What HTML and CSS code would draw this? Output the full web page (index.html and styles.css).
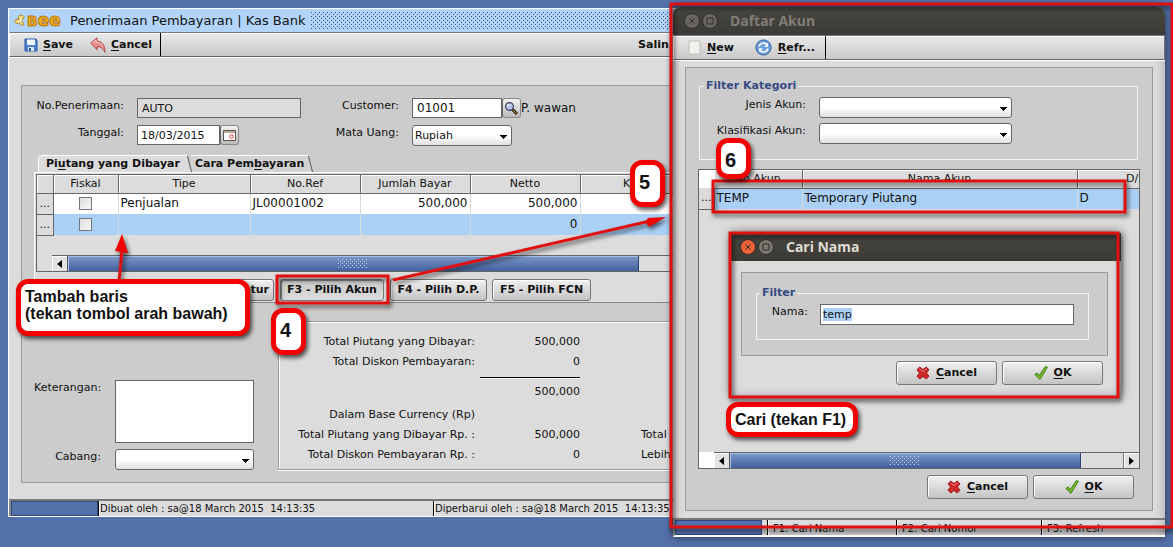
FILE: index.html
```html
<!DOCTYPE html>
<html lang="id">
<head>
<meta charset="utf-8">
<title>Penerimaan Pembayaran | Kas Bank</title>
<link rel="stylesheet" href="styles.css">
</head>
<body>
<svg class="defs" width="0" height="0" aria-hidden="true">
  <defs>
    <pattern id="hatch" width="4" height="4" patternUnits="userSpaceOnUse">
      <rect width="1" height="1" fill="#2f5187"/><rect x="2" y="2" width="1" height="1" fill="#2f5187"/>
    </pattern>
    <pattern id="grip" width="4" height="4" patternUnits="userSpaceOnUse">
      <rect width="1" height="1" fill="#c5d6f2"/><rect x="2" y="2" width="1" height="1" fill="#c5d6f2"/>
    </pattern>
    <symbol id="i-cross" viewBox="0 0 14 14">
      <path d="M3.8 1 7 3.600 10.200 1 13 3.800 10.400 7l2.600 3.200-2.800 2.800L7 10.400 3.800 13 1 10.200 3.600 7 1 3.800z" fill="#cf2a2a" stroke="#a3161b" stroke-linejoin="round"/>
      <path d="M3.500 2.800 7 5.500l3.500-2.700" fill="none" stroke="#ec8080" stroke-width="1"/>
    </symbol>
    <symbol id="i-check" viewBox="0 0 14 14">
      <path d="M.8 8.600 3.200 6.800l2 2.800L11.200.7l2.300.4L6 13.500z" fill="#73b82c" stroke="#3f7a12" stroke-width=".9" stroke-linejoin="round"/>
    </symbol>
    <symbol id="i-left" viewBox="0 0 5 8"><path d="M5 0v8L0 4z"/></symbol>
    <symbol id="i-right" viewBox="0 0 5 8"><path d="M0 0v8l5-4z"/></symbol>
  </defs>
</svg>

<main class="desktop">
  <section class="window main-window">
    <header class="titlebar">
      <svg class="logo" width="50" height="16" viewBox="0 0 50 16" role="img" aria-label="Bee">
        <path d="M8 2.500C5.500.5 3.500 4 5 6.500 1 5.500-.5 8.500 2 10c1.500.8 2.500.3 3.500-.5.500 3 3.500 4 4.500 1.500L7.500 8 10 4.500C10 3 9 2.500 8 2.500z" fill="#f7d978" stroke="#a5842c"/>
        <path d="M5.500 6 8 7.500M4 9l3-1" stroke="#fff" fill="none"/>
        <text x="13" y="13" class="logo-text">B<tspan class="logo-small">ee</tspan></text>
      </svg>
      <h1>Penerimaan Pembayaran | Kas Bank</h1>
      <svg class="hatch" aria-hidden="true"><rect width="100%" height="100%" fill="url(#hatch)"/></svg>
    </header>
    <div class="toolbar">
      <div class="tool-group">
        <button class="tool" type="button">
          <svg width="14" height="14" viewBox="0 0 14 14"><path d="M1 1h11l1 1v11H1z" fill="#4b80d0" stroke="#2b59a8"/><path d="M3 1.500h8V7H3z" fill="#f4f8fd"/><path d="M4 9h6v4H4z" fill="#dfe6ee"/><path d="M5 10h2v3H5z" fill="#2b59a8"/></svg>
          <span><u>S</u>ave</span></button>
        <button class="tool" type="button">
          <svg width="16" height="16" viewBox="0 0 16 16"><path d="M.8 6 7 .8v3.400c5 0 8 4 8 11-2-4-4.500-5.500-8-5.400v3z" fill="#e98b8b" stroke="#b64444" stroke-linejoin="round"/><path d="M2.500 6 6 3v2.300c4 0 6 2 7 4" fill="none" stroke="#f9d3d0"/></svg>
          <span><u>C</u>ancel</span></button>
      </div>
      <button class="tool copy" type="button">Salin</button>
    </div>

    <div class="panel">
      <form class="head-form">
        <label for="no">No.Penerimaan:</label>
        <input id="no" class="field readonly" value="AUTO" readonly>
        <label for="cust">Customer:</label>
        <div class="joined"><input id="cust" class="field cust" value="01001"><button class="mini" type="button" aria-label="Cari customer">
          <svg width="15" height="15" viewBox="0 0 15 15"><path d="m8 8 5 5" stroke="#2b1d0c" stroke-width="3"/><path d="m9 9 3.500 3.500" stroke="#c79a4a"/><circle cx="5.500" cy="5.500" r="3.900" fill="#b9c3e6" stroke="#3c3f5c" stroke-width="1.200"/><path d="M3.500 5.500a2 2 0 0 1 2-2" fill="none" stroke="#fff"/></svg></button><span class="cust-name">P. wawan</span></div>
        <label for="tgl">Tanggal:</label>
        <div class="joined"><input id="tgl" class="field date" value="18/03/2015"><button class="mini" type="button" aria-label="Pilih tanggal">
          <svg width="13" height="11" viewBox="0 0 13 11"><path d="M.5.500h12v10H.500z" fill="#fff" stroke="#5e5148"/><path d="M1 1h11v2H1z" fill="#b9a89c"/><circle cx="8.500" cy="6.500" r="1.800" fill="none" stroke="#d33"/></svg></button></div>
        <label for="uang">Mata Uang:</label>
        <select id="uang" class="combo currency"><option>Rupiah</option></select>
      </form>

      <div class="tabs" role="tablist">
        <button class="tab active" role="tab" type="button">Pi<u>u</u>tang yang Dibayar</button>
        <button class="tab" role="tab" type="button">Cara Pem<u>b</u>ayaran</button>
      </div>
      <div class="tab-pane">
        <div class="grid-box">
          <table class="grid">
            <colgroup><col class="c-mark"><col class="c-fiskal"><col class="c-tipe"><col class="c-num"><col class="c-num"><col class="c-num"><col class="c-num"><col></colgroup>
            <thead><tr><th></th><th>Fiskal</th><th>Tipe</th><th>No.Ref</th><th>Jumlah Bayar</th><th>Netto</th><th>Kurs</th><th></th></tr></thead>
            <tbody>
              <tr><td class="mark">...</td><td class="mid"><input type="checkbox" aria-label="Fiskal baris 1"></td><td>Penjualan</td><td>JL00001002</td><td class="num">500,000</td><td class="num">500,000</td><td></td><td></td></tr>
              <tr class="selected"><td class="mark">...</td><td class="mid"><input type="checkbox" aria-label="Fiskal baris 2"></td><td></td><td></td><td></td><td class="num">0</td><td></td><td></td></tr>
            </tbody>
          </table>
          <div class="scroll">
            <button class="arrow" type="button" aria-label="Geser kiri"><svg width="5" height="8"><use href="#i-left"/></svg></button>
            <div class="thumb main-thumb"><svg width="30" height="10"><rect width="30" height="10" fill="url(#grip)"/></svg></div>
          </div>
        </div>
        <div class="actions">
          <button class="btn f2" type="button">F2 - Retur</button>
          <button class="btn f3" type="button">F3 - Pilih Akun</button>
          <button class="btn f4" type="button">F4 - Pilih D.P.</button>
          <button class="btn f5" type="button">F5 - Pilih FCN</button>
        </div>
      </div>

      <div class="lower">
        <div class="notes">
          <label for="ket">Keterangan:</label><textarea id="ket"></textarea>
          <label for="cab">Cabang:</label><select id="cab" class="combo"><option></option></select>
        </div>
        <div class="totals">
          <div class="line"><span>Total Piutang yang Dibayar:</span><span>500,000</span></div>
          <div class="line"><span>Total Diskon Pembayaran:</span><span>0</span></div>
          <div class="line sum"><span></span><span>500,000</span></div>
          <div class="line base"><span>Dalam Base Currency (Rp)</span></div>
          <div class="line"><span>Total Piutang yang Dibayar Rp. :</span><span>500,000</span><span class="third">Total</span></div>
          <div class="line"><span>Total Diskon Pembayaran Rp. :</span><span>0</span><span class="third">Lebih</span></div>
        </div>
      </div>
    </div>

    <footer class="status main-status">
      <span class="progress"></span><span class="cell created">Dibuat oleh : sa@18 March 2015&nbsp; 14:13:35</span><span class="cell">Diperbarui oleh : sa@18 March 2015&nbsp; 14:13:35</span>
    </footer>
  </section>

  <section class="window account-window">
    <header class="dark-title inactive">
      <svg width="34" height="16" viewBox="0 0 34 16"><g fill="#68665f" stroke="#302f2b"><circle cx="8" cy="8" r="7.500"/><circle cx="26" cy="8" r="7.500"/><path d="m5.500 5.500 5 5m0-5-5 5M23 5h6v6h-6z" fill="none"/></g></svg>
      <h2>Daftar Akun</h2>
    </header>
    <div class="toolbar">
      <div class="tool-group account-tools">
        <button class="tool" type="button">
          <svg width="13" height="15" viewBox="0 0 13 15"><path d="M1 1h11v13H1z" fill="#f1f4ee" stroke="#bcc0b8"/></svg>
          <span><u>N</u>ew</span></button>
        <button class="tool" type="button">
          <svg width="17" height="17" viewBox="0 0 17 17"><circle cx="8.500" cy="8.500" r="7.600" fill="#6f9fdb" stroke="#2f5fa8"/><path d="M4 7.500c1-4 6-4.500 8.500-1.500M13 9.500c-1 4-6 4.500-8.500 1.500" fill="none" stroke="#fff" stroke-width="1.500"/><path d="M13 4v3.800H9.200zM4 13V9.200h3.800z" fill="#fff"/></svg>
          <span><u>R</u>efr...</span></button>
      </div>
    </div>
    <div class="panel account-panel">
      <fieldset class="category">
        <legend>Filter Kategori</legend>
        <label for="jenis">Jenis Akun:</label><select id="jenis" class="combo"><option></option></select>
        <label for="klas">Klasifikasi Akun:</label><select id="klas" class="combo"><option></option></select>
      </fieldset>
      <div class="grid-box account-box">
        <table class="grid account-grid">
          <colgroup><col class="c-mark"><col class="c-kode"><col class="c-nama"><col></colgroup>
          <thead><tr><th class="blank"></th><th>No Akun</th><th>Nama Akun</th><th>D/K</th></tr></thead>
          <tbody><tr class="selected"><td class="mark">...</td><td>TEMP</td><td>Temporary Piutang</td><td>D</td></tr></tbody>
        </table>
        <div class="scroll account-scroll">
          <button class="arrow" type="button" aria-label="Geser kiri"><svg width="5" height="8"><use href="#i-left"/></svg></button>
          <div class="thumb account-thumb"><svg width="30" height="10"><rect width="30" height="10" fill="url(#grip)"/></svg></div>
          <button class="arrow end" type="button" aria-label="Geser kanan"><svg width="5" height="8"><use href="#i-right"/></svg></button>
        </div>
      </div>
      <div class="dialog-actions">
        <button class="btn" type="button"><svg width="14" height="14"><use href="#i-cross"/></svg><span><u>C</u>ancel</span></button>
        <button class="btn" type="button"><svg width="14" height="14"><use href="#i-check"/></svg><span><u>O</u>K</span></button>
      </div>
    </div>
    <footer class="status account-status">
      <span class="progress"></span><span class="cell k1">F1: Cari Nama</span><span class="cell k2">F2: Cari Nomor</span><span class="cell">F3: Refresh</span>
    </footer>
  </section>

  <section class="window search-window">
    <header class="dark-title">
      <svg width="34" height="16" viewBox="0 0 34 16"><circle cx="8" cy="8" r="7.500" fill="#ea6238" stroke="#3a2a22"/><circle cx="26" cy="8" r="7.500" fill="#7b7970" stroke="#302f2b"/><path d="m5.500 5.500 5 5m0-5-5 5M23 5h6v6h-6z" fill="none" stroke="#302f2b"/></svg>
      <h2>Cari Nama</h2>
    </header>
    <div class="panel search-panel">
      <fieldset class="name-filter">
        <legend>Filter</legend>
        <label for="nama">Nama:</label><input id="nama" class="field" value="temp" autofocus>
      </fieldset>
    </div>
    <div class="dialog-actions">
      <button class="btn" type="button"><svg width="14" height="14"><use href="#i-cross"/></svg><span><u>C</u>ancel</span></button>
      <button class="btn" type="button"><svg width="14" height="14"><use href="#i-check"/></svg><span><u>O</u>K</span></button>
    </div>
  </section>

  <svg class="marks" aria-hidden="true">
    <g fill="none" stroke="#e01010" stroke-width="3">
      <rect x="671" y="4" width="501" height="523"/>
      <rect x="277" y="276" width="111" height="27"/>
      <rect x="713" y="181" width="412" height="31"/>
      <rect x="730" y="233" width="388" height="164"/>
      <path d="M119 282 122 250M393 280 650 221"/>
    </g>
    <path d="m122 234 6 19-13-2zM666 217l-17 10q-5-5-1-9z" fill="#f00000"/>
  </svg>
  <p class="callout add-row">Tambah baris<br>(tekan tombol arah bawah)</p>
  <p class="callout find">Cari (tekan F1)</p>
  <p class="callout step four">4</p>
  <p class="callout step five">5</p>
  <p class="callout step six">6</p>
</main>
<script src="app.js"></script>
</body>
</html>
```
FILE: app.js
```js
const nama = document.getElementById("nama");
nama.focus();
nama.select();
```
FILE: styles.css
```css
* { box-sizing: border-box; }
body, h1, h2, p, form, fieldset { margin: 0; }
body { background: #5471aa; color: #111; font: 11px/14px "DejaVu Sans", sans-serif; }
button, input, select, textarea { font: inherit; color: inherit; margin: 0; border-radius: 0; }
label, .cell, .line, th, td, .btn, h1, h2 { white-space: nowrap; }
.defs { position: absolute; }
.desktop { position: relative; min-height: 100vh; overflow: hidden; }

/* windows */
.window { position: absolute; background: #dcdcdc; }
.main-window { left: 8px; right: 60px; top: 8px; border: 1px solid #fff; }
.account-window { left: 673px; width: 492px; top: 7px; border-radius: 8px 8px 0 0; box-shadow: 0 0 8px rgba(0,0,0,.6), inset 0 0 12px rgba(0,0,0,.25); }
.search-window { left: 731px; width: 390px; top: 233px; box-shadow: 0 0 10px rgba(0,0,0,.6), inset 0 0 8px rgba(0,0,0,.25); }

.titlebar { display: flex; align-items: center; gap: 6px; height: 23px; padding-left: 5px; background: #b2d4f8; }
.titlebar h1 { font-size: 13px; font-weight: 400; line-height: 16px; }
.logo-text { font: bold 14px "DejaVu Sans", sans-serif; fill: #f9b91c; stroke: #b9770e; stroke-width: 1px; }
.logo-small { font-size: 17px; }
.hatch { flex: 1; height: 18px; }
.dark-title { display: flex; align-items: center; gap: 12px; height: 28px; padding-left: 9px; background: linear-gradient(#47463f, #3b3a36); color: #dfdbd2; }
.account-window .dark-title { border-radius: 8px 8px 0 0; padding-left: 11px; }
.dark-title h2 { font: bold 14px/20px "Noto Sans", "Open Sans", sans-serif; }
.dark-title.inactive { color: #807d78; }

.toolbar { display: flex; height: 25px; border: 1px solid #777; border-left-color: #fff; border-bottom-color: #666; background: linear-gradient(#e9e9e9, #c9c9c9); box-shadow: inset 0 1px #fff, 0 1px #fff; }
.tool-group { display: flex; align-items: center; gap: 17px; padding: 0 7px 0 14px; border-right: 1px solid #000; }
.account-tools { gap: 21px; padding-right: 9px; }
.tool { display: flex; align-items: center; gap: 5px; padding: 0; border: 0; background: none; font-weight: 700; }
.tool-group .tool + .tool { padding-right: 1px; }
.account-tools .tool { gap: 6px; }
.copy { margin-left: 477px; }
u { text-underline-offset: 2px; }

.panel { margin: 28px 12px 0; padding: 12px; border: 1px solid #999; background: #ccc; }
.main-window .panel { border-right: 0; padding-right: 0; }

/* controls */
.field { height: 20px; padding: 0 4px; border: 1px solid #666; background: #fff; outline: 0; }
.field.readonly { background: #dcdcdc; width: 164px; }
.field.cust { width: 90px; font-size: 12px; }
.field.date { width: 83px; padding: 0 3px; }
.combo { appearance: none; height: 21px; padding: 0 4px; border: 1px solid #666; border-radius: 3px; background-color: #fff; background-image: linear-gradient(to bottom right, #000 50%, transparent 50%), linear-gradient(to bottom left, #000 50%, transparent 50%), linear-gradient(#fff 50%, #e0e0e0); background-size: 4px 4px, 4px 4px, 100% 100%; background-position: right 3px top 9px, right 7px top 9px, 0 0; background-repeat: no-repeat; }
.currency { width: 100px; padding-left: 2px; }
.joined { display: flex; }
.mini { display: grid; place-items: center; width: 19px; height: 20px; padding: 0; border: 1px solid #888; border-left-color: #666; border-radius: 3px; background: linear-gradient(#f2f2f2, #bbb); }
.cust-name { font-size: 12px; line-height: 20px; }
.btn { display: flex; align-items: center; justify-content: center; gap: 6px; height: 22px; padding: 0; border: 1px solid #777; border-radius: 3px; background: linear-gradient(#f0f0f0, #c4c4c4); box-shadow: inset 1px 1px #fff; font-weight: 700; }

.head-form { display: grid; grid-template-columns: 90px 164px 85px auto; column-gap: 13px; row-gap: 7px; justify-content: start; }
.head-form label { text-align: right; }

/* tabs */
.tabs { display: flex; gap: 4px; margin: 9px 0 0 4px; }
.tab { position: relative; height: 17px; padding: 0 4px; border: 0; border-top: 1px solid #fff; background: #d2d2d2; font-weight: 700; line-height: 16px; }
.tab.active { padding: 0 7px; background: #dcdcdc; border-left: 1px solid #fff; border-top-left-radius: 5px; }
.tab::after { content: ""; position: absolute; z-index: 1; top: 0; right: -3px; height: 16px; width: 5px; border-right: 1px solid #555; background: inherit; transform: skewX(14deg); }
.tab-pane { height: 131px; border-top: 1px solid #fff; border-bottom: 1px solid #888; background: #dcdcdc; padding: 1px 0 0 1px; border-left: 1px solid #fff; }

/* tables */
.grid-box { display: flex; flex-direction: column; height: 98px; border: 1px solid #666; background: #dcdcdc; overflow: hidden; }
.grid { width: 100%; table-layout: fixed; border-collapse: collapse; }
.c-mark { width: 16px; } .c-fiskal { width: 65px; } .c-tipe { width: 132px; } .c-num { width: 110px; }
.grid th { height: 18px; padding: 0; border-right: 1px solid #666; border-bottom: 1px solid #666; font-weight: 400; box-shadow: inset 1px 1px #fff; }
.grid td { height: 21px; padding: 0 2px 2px; border-right: 1px solid #d8d8d8; background: #fff; font-size: 12px; overflow: hidden; }
.grid .selected td { background: #abd0f6; }
.grid td.mark, .grid .selected td.mark { padding: 0; background: #dcdcdc; border-right: 1px solid #666; border-bottom: 1px solid #666; font-size: 11px; text-align: center; }
.grid .num { text-align: right; }
.grid .mid { padding: 0; text-align: center; line-height: 0; }
.grid input { appearance: none; width: 13px; height: 13px; border: 1px solid #777; background: linear-gradient(135deg, #ddd, #f8f8f8); vertical-align: middle; }
.scroll { display: flex; height: 16px; margin-top: auto; border-left: 15px solid #dcdcdc; background: linear-gradient(#666, #666) 0 0 / 100% 1px no-repeat; padding-top: 1px; }
.arrow { display: grid; place-items: center; width: 16px; padding: 0; border: 0; border-right: 1px solid #555; background: #e2e2e2; box-shadow: inset 1px 1px #fff; }
.arrow.end { margin-left: auto; border-left: 1px solid #777; border-right: 0; }
.thumb { display: grid; place-items: center; border-right: 1px solid #2c4474; background: linear-gradient(#7d99ca, #42609d); box-shadow: inset 1px 1px #a9c0e6; }
.main-thumb { width: 571px; } .account-thumb { width: 351px; }
.account-scroll { border-left-color: #fff; }

.actions { display: flex; margin: 7px 0 0 126px; }
.f2 { width: 112px; justify-content: flex-end; padding-right: 4px; margin-right: 6px; }
.f3 { width: 104px; margin-right: 6px; background: linear-gradient(#c8c8c8, #dcdcdc); box-shadow: inset 1px 1px #888; }
.f4 { width: 97px; margin-right: 5px; }
.f5 { width: 99px; }

/* notes and totals */
.lower { display: grid; grid-template-columns: 220px 1fr; gap: 24px; margin-top: 18px; }
.notes { display: grid; grid-template-columns: 67px 139px; gap: 6px 14px; align-content: end; justify-content: start; }
.notes label { text-align: right; }
.notes textarea { height: 63px; border: 1px solid #666; background: #fff; resize: none; }
.totals { padding: 10px 0 4px; border: 1px solid #999; border-right: 0; background: #dcdcdc; box-shadow: inset 1px 1px #fff, 0 1px #fff; }
.line { display: grid; grid-template-columns: 196px 100px 1fr; column-gap: 5px; line-height: 20px; text-align: right; }
.sum { margin-top: 5px; }
.sum span:last-child { border-top: 1px solid #000; box-shadow: inset 0 1px #fff; padding-top: 4px; }
.base { margin-top: 3px; }
.third { padding-left: 56px; text-align: left; }

/* form labels sit near the top of their controls */
.head-form label, .notes label, .category label, .name-filter label { padding-top: 1px; }

/* status bars */
.status { display: flex; height: 17px; border-top: 2px solid #777; border-left: 2px solid #888; font: 10px/15px "DejaVu Sans", sans-serif; }
.main-status { margin-top: 16px; }
.progress { width: 87px; border: 1px solid #2f4980; background: #5471aa; }
.cell { padding-left: 1px; border-left: 1px solid #000; box-shadow: inset 1px 0 #fff; }
.created { width: 335px; }

/* account dialog */
.account-panel { margin-top: 7px; padding: 11px 12px; }
fieldset { border: 1px solid #f2f2f2; min-width: 0; }
legend { padding: 0 2px; color: #344b84; font-weight: 700; }
.category { display: grid; grid-template-columns: 101px 193px; gap: 5px 13px; height: 81px; margin: 0 2px 0 1px; padding: 4px 5px; align-content: start; }
.category legend { margin-left: -1px; }
.category label, .name-filter label { text-align: right; }
.account-box { height: 300px; margin-top: 9px; }
.account-grid { width: 496px; }
.account-grid .c-mark { width: 15px; } .c-kode { width: 88px; } .c-nama { width: 275px; }
.grid .blank { background: #fff; border-right: 0; border-bottom: 0; }
.dialog-actions { display: flex; justify-content: flex-end; gap: 5px; padding: 6px 6px 0 0; }
.dialog-actions .btn { width: 101px; height: 24px; }
.account-status { height: 19px; margin-top: 7px; border-bottom: 2px solid #fff; }
.account-status .cell { padding-left: 5px; line-height: 17px; }
.account-status .progress { margin-right: 5px; }
.k1 { width: 129px; } .k2 { width: 145px; }

/* search dialog */
.search-window { padding-bottom: 11px; }
.search-panel { margin: 11px 13px 0 10px; padding: 13px 18px 15px 14px; }
.name-filter { display: grid; grid-template-columns: 49px 254px; column-gap: 12px; padding: 4px 2px 13px; height: 54px; align-content: start; }
.name-filter legend { margin-left: 1px; }
.name-filter .field { height: 21px; padding: 0 2px; }
.name-filter .field::selection { background: #abcff5; color: #111; }
.search-window .dialog-actions { padding: 5px 18px 0 0; }

/* annotations */
.marks { position: absolute; inset: 0; width: 100%; height: 100%; pointer-events: none; filter: drop-shadow(2px 3px 2px rgba(0,0,0,.6)); }
.callout { position: absolute; padding: 5px; border: 5px solid #f40000; border-radius: 12px; background: #fff; color: #111; font: bold 16px/17px "Liberation Sans", Arial, sans-serif; white-space: nowrap; box-shadow: 2px 3px 4px rgba(0,0,0,.65); }
.add-row { left: 16px; top: 279px; width: 234px; height: 57px; padding: 4px; }
.find { left: 726px; top: 402px; width: 132px; padding: 4px; }
.step { width: 35px; height: 47px; padding: 5px 4px; font-size: 20px; line-height: 24px; }
.four { left: 271px; top: 308px; }
.five { left: 630px; top: 160px; }
.six { left: 716px; top: 138px; height: 41px; }
```
